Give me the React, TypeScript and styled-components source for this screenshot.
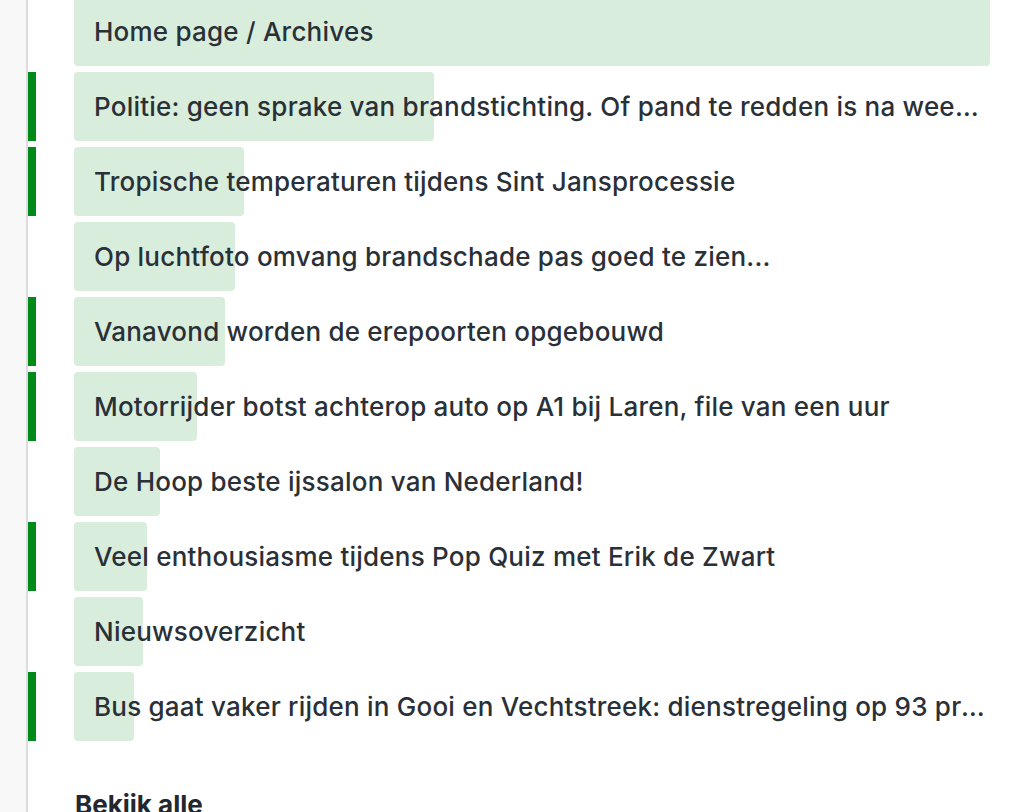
import React from "react";
import styled, { createGlobalStyle } from "styled-components";

const Global = createGlobalStyle`
  html, body { margin: 0; padding: 0; background: #ffffff; }
  body { font-family: Inter, "Noto Sans", "Liberation Sans", sans-serif; overflow: hidden; }
`;

const Page = styled.div`
  display: flex;
  min-height: 812px;
  height: 812px;
  overflow: hidden;
`;

const Gutter = styled.div`
  width: 26px;
  flex: none;
  background: #f8f8f8;
  border-right: 2px solid #dcdcdc;
`;

const Main = styled.div`
  flex: 1;
  display: flex;
  flex-direction: column;
  margin-top: -3px;
`;

const List = styled.div`
  display: flex;
  flex-direction: column;
  gap: 6px;
`;

const Row = styled.div`
  display: grid;
  grid-template-columns: 8px 1fr;
  column-gap: 38px;
  height: 69px;
  padding-right: 34px;
`;

const Marker = styled.div<{ $on: boolean }>`
  background: ${(p) => (p.$on ? "#008a1a" : "transparent")};
`;

const Bar = styled.div`
  position: relative;
  display: flex;
  align-items: center;
  min-width: 0;
`;

const Fill = styled.div`
  position: absolute;
  left: 0;
  top: 0;
  bottom: 0;
  background: #d8eddb;
  border-radius: 4px;
`;

const Label = styled.span`
  position: relative;
  padding: 0 2px 0 20px;
  font-size: 26px;
  font-weight: 500;
  color: #2a3037;
  white-space: nowrap;
  overflow: hidden;
  text-overflow: ellipsis;
  letter-spacing: 0.22px;
`;

const More = styled.div`
  margin-top: 48px;
  padding-left: 47px;
  font-size: 26px;
  font-weight: 700;
  color: #22282e;
`;

const items = [
  { t: "Home page / Archives", p: 100, m: false },
  { t: "Politie: geen sprake van brandstichting. Of pand te redden is na weekend duidelijk", p: 39.3, m: true },
  { t: "Tropische temperaturen tijdens Sint Jansprocessie", p: 18.6, m: true },
  { t: "Op luchtfoto omvang brandschade pas goed te zien...", p: 17.6, m: false },
  { t: "Vanavond worden de erepoorten opgebouwd", p: 16.5, m: true },
  { t: "Motorrijder botst achterop auto op A1 bij Laren, file van een uur", p: 13.4, m: true },
  { t: "De Hoop beste ijssalon van Nederland!", p: 9.4, m: false },
  { t: "Veel enthousiasme tijdens Pop Quiz met Erik de Zwart", p: 8.0, m: true },
  { t: "Nieuwsoverzicht", p: 7.5, m: false },
  { t: "Bus gaat vaker rijden in Gooi en Vechtstreek: dienstregeling op 93 procent", p: 6.6, m: true },
];

export default function App() {
  return (
    <>
      <Global />
      <Page>
        <Gutter />
        <Main>
          <List>
            {items.map((it) => (
              <Row key={it.t}>
                <Marker $on={it.m} />
                <Bar>
                  <Fill style={{ width: `${it.p}%` }} />
                  <Label>{it.t}</Label>
                </Bar>
              </Row>
            ))}
          </List>
          <More>Bekijk alle</More>
        </Main>
      </Page>
    </>
  );
}
